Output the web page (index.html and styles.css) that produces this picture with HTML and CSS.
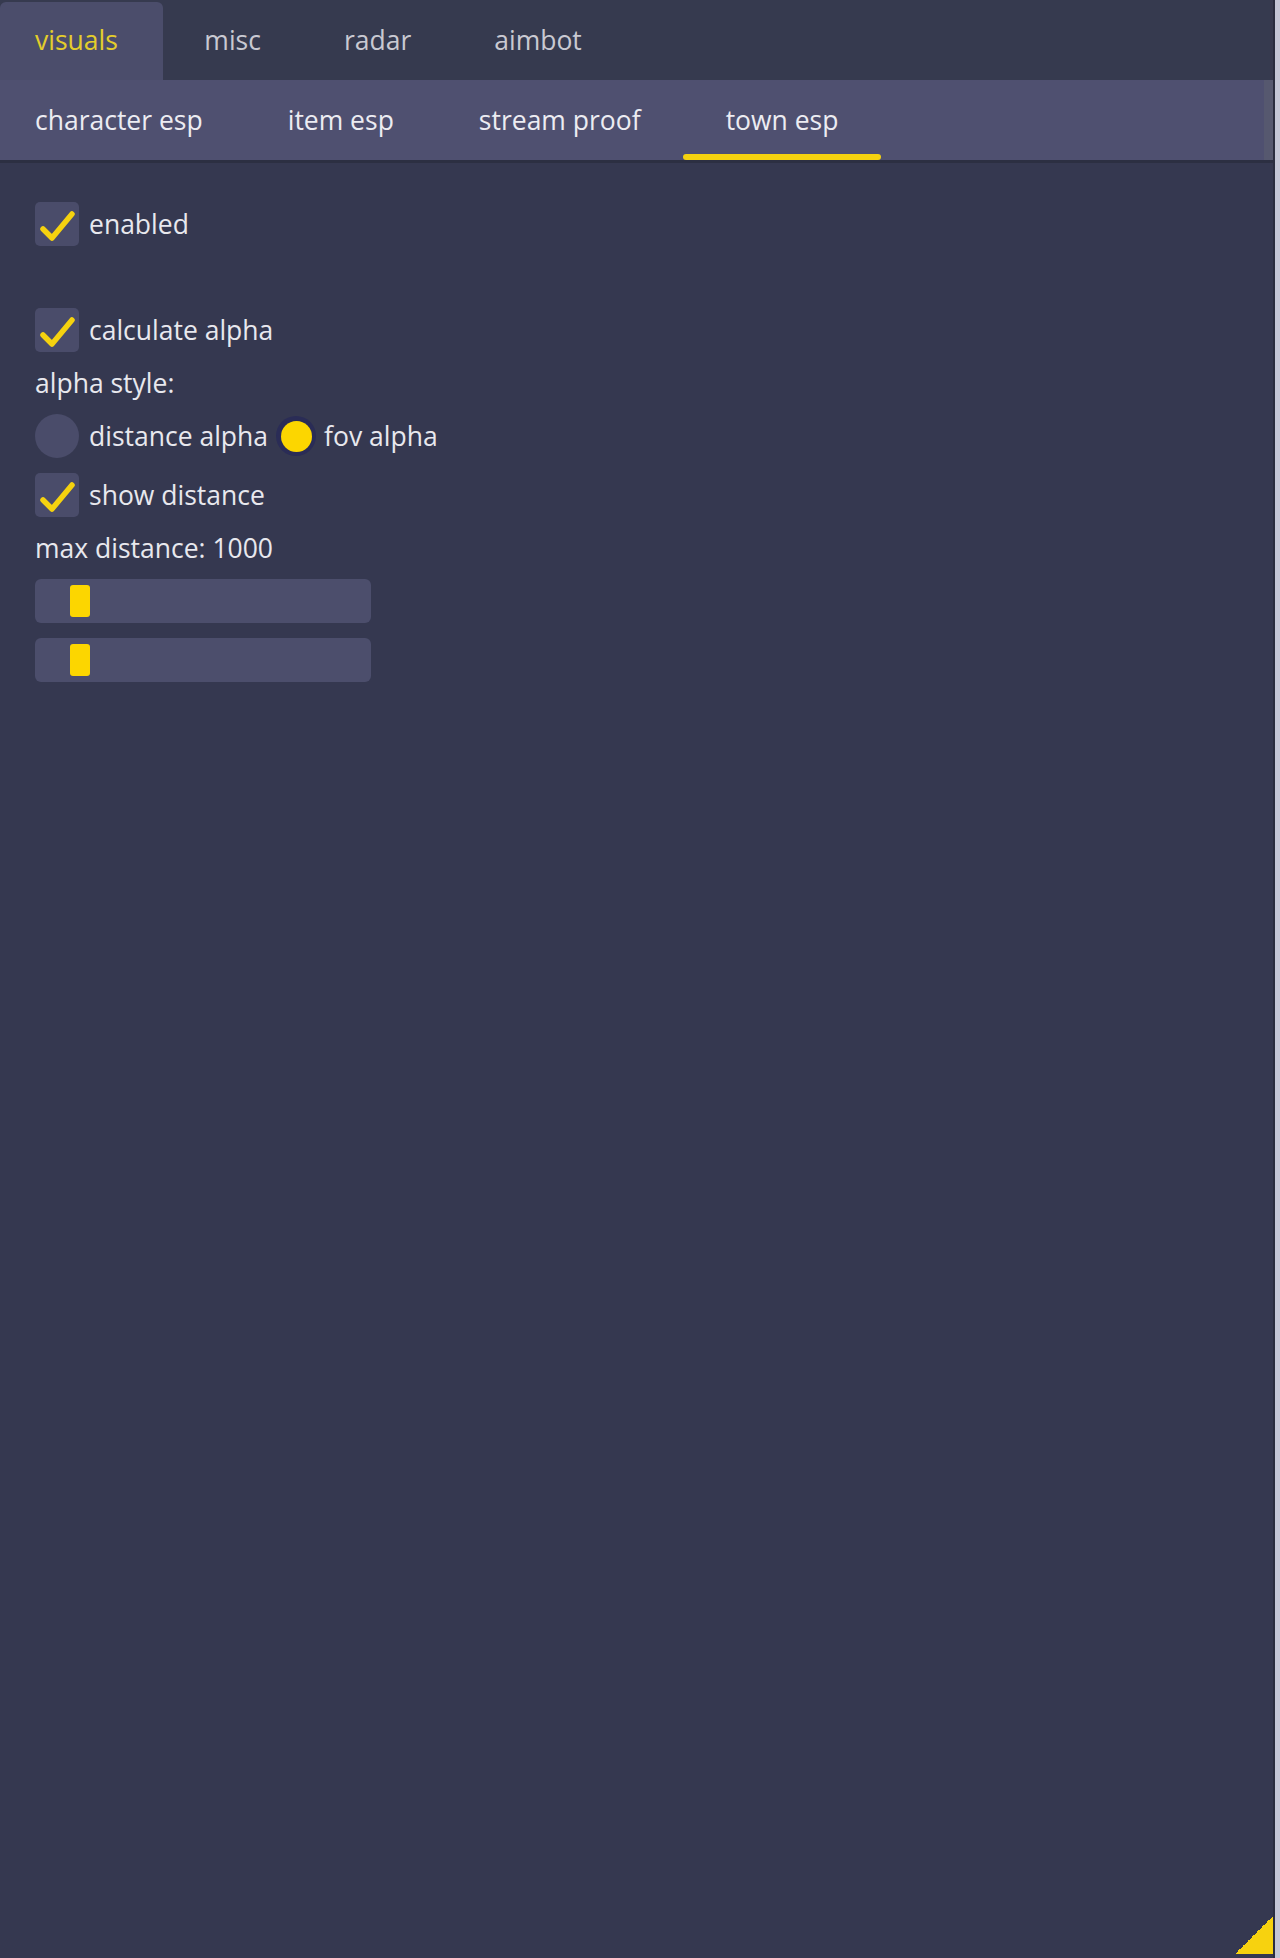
FILE: index.html
```html
<!DOCTYPE html>
<html>
<head>
<meta charset="utf-8">
<link rel="stylesheet" href="styles.css">
</head>
<body>
<div class="panel">
  <nav class="tabs">
    <div class="tab active">visuals</div>
    <div class="tab">misc</div>
    <div class="tab">radar</div>
    <div class="tab">aimbot</div>
  </nav>
  <nav class="subtabs">
    <div class="subtab">character esp</div>
    <div class="subtab">item esp</div>
    <div class="subtab">stream proof</div>
    <div class="subtab active">town esp</div>
  </nav>
  <main class="content">
    <div class="row"><span class="checkbox"><svg viewBox="0 0 44 44"><path d="M8 27 L17 36 L37 12" fill="none" stroke="#f5d20f" stroke-width="5.5" stroke-linecap="round" stroke-linejoin="round"/></svg></span><span class="label">enabled</span></div>
    <div class="blank"></div>
    <div class="row"><span class="checkbox"><svg viewBox="0 0 44 44"><path d="M8 27 L17 36 L37 12" fill="none" stroke="#f5d20f" stroke-width="5.5" stroke-linecap="round" stroke-linejoin="round"/></svg></span><span class="label">calculate alpha</span></div>
    <div class="text">alpha style:</div>
    <div class="row"><span class="radio"></span><span class="label">distance alpha</span><span class="radio on"><span class="dot"></span></span><span class="label">fov alpha</span></div>
    <div class="row"><span class="checkbox"><svg viewBox="0 0 44 44"><path d="M8 27 L17 36 L37 12" fill="none" stroke="#f5d20f" stroke-width="5.5" stroke-linecap="round" stroke-linejoin="round"/></svg></span><span class="label">show distance</span></div>
    <div class="text">max distance: 1000</div>
    <div class="slider"><span class="grab"></span></div>
    <div class="slider"><span class="grab"></span></div>
  </main>
  <div class="grip"></div>
</div>
</body>
</html>
```
FILE: styles.css
```css
* { box-sizing: border-box; }
html, body { margin: 0; padding: 0; }
body {
  background: #c4c6d6;
  font-family: "Open Sans", "Noto Sans", sans-serif;
  font-size: 26.5px;
  color: #e8e8ee;
}
.panel {
  position: relative;
  width: 1275px;
  height: 1958px;
  background: #353850;
  border-right: 2px solid #2a2d3f;
}
.tabs {
  display: flex;
  height: 80px;
  padding-top: 2px;
  background: #363a4f;
}
.tab {
  display: flex;
  align-items: center;
  padding: 0 41.5px 2px;
  color: #c9c9d2;
  border-radius: 6px 6px 0 0;
}
.tab.active {
  background: #4b4d6b;
  color: #e3cd2b;
  padding-left: 35px;
  padding-right: 45px;
}
.subtabs {
  display: flex;
  height: 80px;
  background: #4f5070;
  border-right: 9px solid #56586f;
  box-shadow: 0 3px 0 #2c2f42;
}
.subtab {
  position: relative;
  display: flex;
  align-items: center;
  padding: 0 42.5px;
  color: #ececf2;
}
.subtab:first-child { padding-left: 35px; }
.subtab.active::after {
  content: "";
  position: absolute;
  left: 0;
  right: 0;
  bottom: 0;
  height: 6px;
  border-radius: 3px;
  background: #f5d20f;
}
.content {
  display: flex;
  flex-direction: column;
  gap: 15px;
  padding: 42px 35px 0;
}
.row {
  display: flex;
  align-items: center;
  gap: 10px;
  height: 44px;
}
.checkbox {
  display: block;
  width: 44px;
  height: 44px;
  border-radius: 5px;
  background: #4a4c6a;
}
.checkbox svg { display: block; width: 44px; height: 44px; }
.blank { height: 32px; }
.text { height: 32px; display: flex; align-items: center; }
.radio {
  width: 44px;
  height: 44px;
  border-radius: 50%;
  background: #4a4c6a;
}
.radio.on {
  width: 40px;
  height: 40px;
  margin: 0 -2px;
  background: #2a2c56;
  display: flex;
  align-items: center;
  justify-content: center;
}
.radio .dot {
  width: 31px;
  height: 31px;
  border-radius: 50%;
  background: #fcd600;
}
.slider {
  width: 336px;
  height: 44px;
  border-radius: 6px;
  background: #4c4e6c;
  padding: 6px 0 0 35px;
}
.grab {
  display: block;
  width: 20px;
  height: 32px;
  border-radius: 3px;
  background: #fcd600;
}
.grip {
  position: absolute;
  right: 0;
  bottom: 4px;
  width: 38px;
  height: 38px;
  background: linear-gradient(to bottom right, transparent 50%, #f7d20f 50%);
}
```
